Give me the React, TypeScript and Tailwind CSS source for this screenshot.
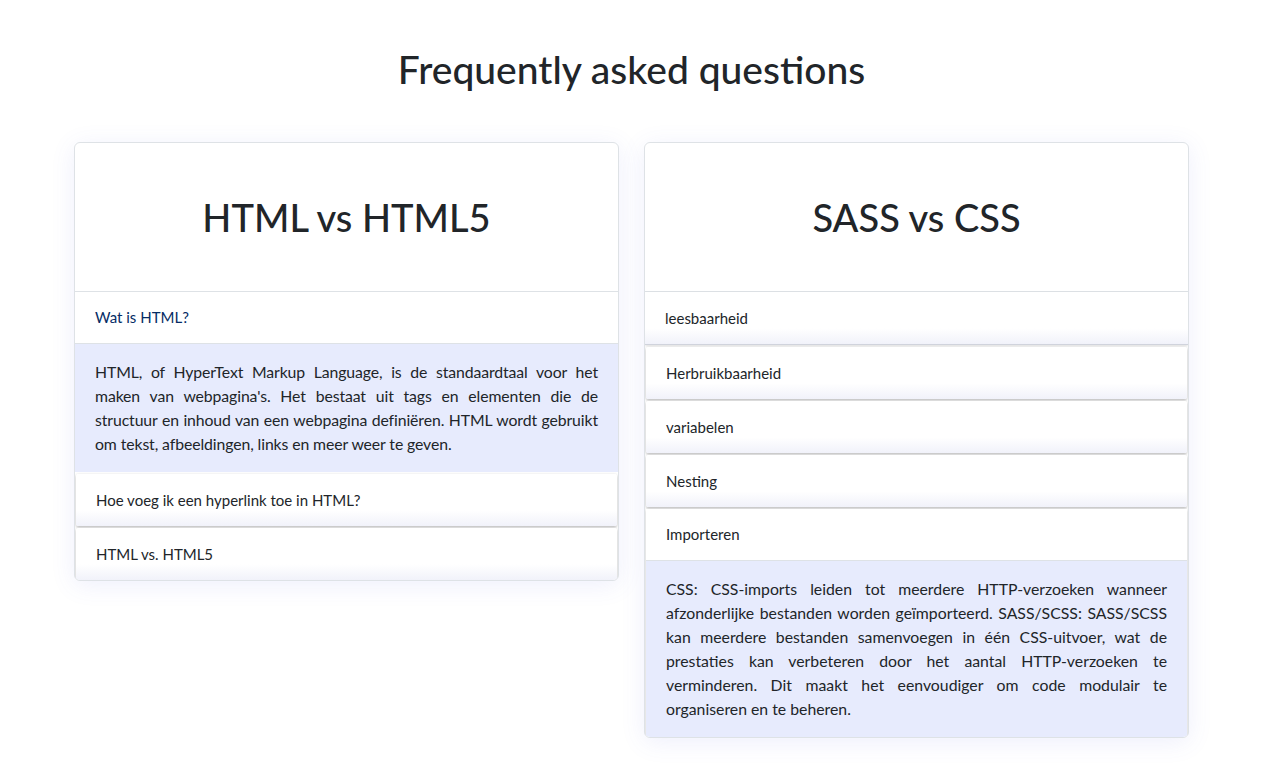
import React from "react";

const font = { fontFamily: "Lato, 'Noto Sans', sans-serif" };

function Collapsed({ label, first }: { label: string; first?: boolean }) {
  return (
    <div
      className={
        first
          ? "border-b border-[#d0d3dc] bg-gradient-to-b from-white from-70% to-[#f1f2fa] shadow-[0_1px_2px_rgba(0,0,0,0.12)]"
          : "mx-[1px] mt-[2px] rounded-[2px] bg-gradient-to-b from-white from-70% to-[#f1f2fa] shadow-[0_1px_3px_rgba(0,0,0,0.3)]"
      }
    >
      <div className="flex h-[52px] items-center px-5 text-[15px] text-[#212529]">{label}</div>
    </div>
  );
}

function Expanded({ label, body, first }: { label: string; body: string; first?: boolean }) {
  return (
    <div className={first ? "" : "mx-[1px] mt-[2px]"}>
      <div className="flex h-[52px] items-center border-b border-[#dee2e6] bg-white px-5 text-[15px] text-[#052c65]">
        {label}
      </div>
      <div className="bg-[#e7ebfd] px-5 pb-[16px] pt-[16px] text-justify text-[15.8px] leading-6 tracking-[-0.1px] text-[#212529]">
        {body}
      </div>
    </div>
  );
}

export default function App() {
  return (
    <div className="min-h-screen bg-white pb-10" style={font}>
      <h1 className="pt-[46px] text-center text-[39px] font-medium leading-[1.2] text-[#212529]">
        Frequently asked questions
      </h1>
      <div className="mx-auto mt-[49px] flex w-[1115px] items-start gap-[25px]">
        <div className="w-[545px] overflow-hidden rounded-md border border-[#dee2e6] bg-white shadow-[0_4px_24px_rgba(90,100,230,0.10)]">
          <div className="flex h-[149px] items-center justify-center border-b border-[#dee2e6]">
            <h2 className="text-[38px] font-medium leading-none text-[#212529]">HTML vs HTML5</h2>
          </div>
          <Expanded
            first
            label="Wat is HTML?"
            body="HTML, of HyperText Markup Language, is de standaardtaal voor het maken van webpagina's. Het bestaat uit tags en elementen die de structuur en inhoud van een webpagina definiëren. HTML wordt gebruikt om tekst, afbeeldingen, links en meer weer te geven."
          />
          <Collapsed label="Hoe voeg ik een hyperlink toe in HTML?" />
          <Collapsed label="HTML vs. HTML5" />
        </div>
        <div className="w-[545px] overflow-hidden rounded-md border border-[#dee2e6] bg-white shadow-[0_4px_24px_rgba(90,100,230,0.10)]">
          <div className="flex h-[149px] items-center justify-center border-b border-[#dee2e6]">
            <h2 className="text-[38px] font-medium leading-none text-[#212529]">SASS vs CSS</h2>
          </div>
          <Collapsed first label="leesbaarheid" />
          <Collapsed label="Herbruikbaarheid" />
          <Collapsed label="variabelen" />
          <Collapsed label="Nesting" />
          <div className="mx-[1px] mt-[2px] shadow-[0_1px_3px_rgba(0,0,0,0.25)]">
            <div className="flex h-[52px] items-center border-b border-[#dee2e6] bg-white px-5 text-[15px] text-[#212529]">
              Importeren
            </div>
            <div className="bg-[#e7ebfd] px-5 pb-[16px] pt-[16px] text-justify text-[15.8px] leading-6 text-[#212529]">
              CSS: CSS-imports leiden tot meerdere HTTP-verzoeken wanneer afzonderlijke bestanden worden geïmporteerd. SASS/SCSS: SASS/SCSS kan meerdere bestanden samenvoegen in één CSS-uitvoer, wat de prestaties kan verbeteren door het aantal HTTP-verzoeken te verminderen. Dit maakt het eenvoudiger om code modulair te organiseren en te beheren.
            </div>
          </div>
        </div>
      </div>
    </div>
  );
}
